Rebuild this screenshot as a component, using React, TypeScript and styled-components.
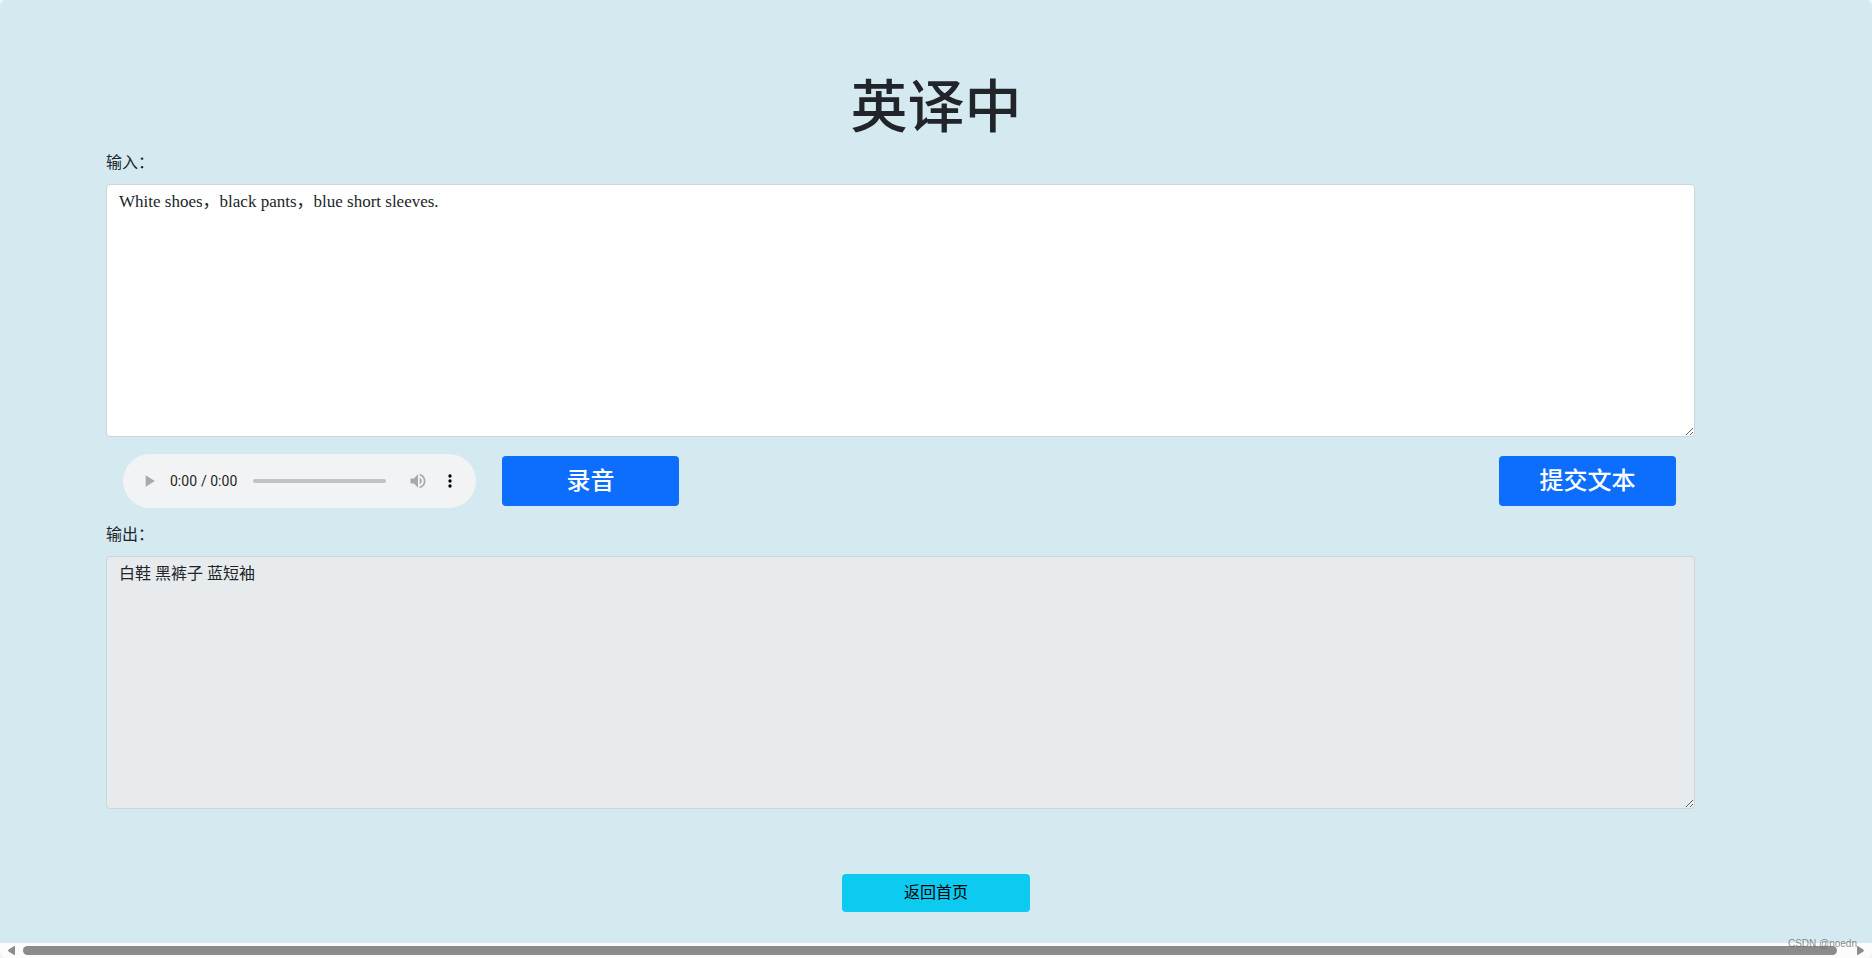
import React, { useState } from "react";
import styled, { createGlobalStyle } from "styled-components";

const GlobalStyle = createGlobalStyle`
  *, *::before, *::after { box-sizing: border-box; }
  html { background: #f4f4f4; }
  body {
    margin: 0;
    color: #212529;
    font-family: "Liberation Serif", "Noto Sans CJK SC", serif;
    font-size: 16px;
    line-height: 24px;
  }
`;

const Page = styled.div`
  position: relative;
  display: flex;
  flex-direction: column;
  min-height: 100vh;
  overflow: hidden;
  background: #d4eaf0;
  border-radius: 6px;
`;

const Main = styled.main`
  display: flex;
  flex: 1;
  flex-direction: column;
  padding-top: 73px;
`;

const Title = styled.h1`
  margin: 0 0 8px;
  font-size: 57px;
  font-weight: 500;
  line-height: 70px;
  text-align: center;
`;

const Form = styled.form`
  display: flex;
  flex-direction: column;
  margin: 0 177px 0 106px;
`;

const Label = styled.label`
  margin-bottom: 9px;
`;

const TextArea = styled.textarea`
  display: block;
  width: 100%;
  height: 253px;
  padding: 5px 12px;
  border: 1px solid #ced4da;
  border-radius: 4px;
  background: ${(p) => (p.readOnly ? "#e7ebee" : "#fff")};
  color: inherit;
  font: inherit;
  font-size: ${(p) => (p.readOnly ? 16 : 17)}px;
  resize: vertical;
`;

const Toolbar = styled.div`
  display: flex;
  align-items: center;
  gap: 26px;
  padding: 17px 19px 15px 17px;
`;

const Player = styled.audio`
  width: 353px;
  height: 54px;
`;

const Button = styled.button<{ $variant: "primary" | "info" }>`
  width: ${(p) => (p.$variant === "primary" ? 177 : 188)}px;
  padding: 6px 12px;
  border: 1px solid transparent;
  border-radius: 4px;
  background: ${(p) => (p.$variant === "primary" ? "#0d6efd" : "#0dcaf0")};
  color: ${(p) => (p.$variant === "primary" ? "#fff" : "#000")};
  font: inherit;
  font-size: ${(p) => (p.$variant === "primary" ? 24 : 16)}px;
  font-weight: ${(p) => (p.$variant === "primary" ? 500 : 400)};
  line-height: ${(p) => (p.$variant === "primary" ? 36 : 24)}px;
  cursor: pointer;
`;

const SubmitSlot = styled.div`
  display: flex;
  margin-left: auto;
`;

const Footer = styled.footer`
  display: flex;
  justify-content: center;
  padding: 65px 0 30px;
`;

const ScrollBar = styled.div`
  display: flex;
  align-items: center;
  gap: 8px;
  height: 15px;
  padding: 0 8px;
  background: #fcfcfc;
`;

const ScrollArrow = styled.button`
  display: flex;
  width: 7px;
  padding: 0;
  border: 0;
  background: none;
`;

const Thumb = styled.div`
  flex: 1;
  height: 9px;
  margin-right: 12px;
  border-radius: 5px;
  background: #8b8b8b;
`;

const Watermark = styled.span`
  position: absolute;
  right: 15px;
  bottom: 6px;
  color: rgba(100, 100, 100, 0.75);
  font-family: "Liberation Sans", sans-serif;
  font-size: 10px;
  line-height: 16px;
`;

export default function App() {
  const [text, setText] = useState("White shoes\uFF0Cblack pants\uFF0Cblue short sleeves.");

  return (
    <Page lang="zh-CN">
      <GlobalStyle />
      <Main>
        <Title>英译中</Title>
        <Form onSubmit={(e) => e.preventDefault()}>
          <Label htmlFor="source">{"输入\uFF1A"}</Label>
          <TextArea
            id="source"
            rows={10}
            spellCheck={false}
            value={text}
            onChange={(e) => setText(e.target.value)}
          />
          <Toolbar>
            <Player controls />
            <Button type="button" $variant="primary">录音</Button>
            <SubmitSlot>
              <Button type="submit" $variant="primary">提交文本</Button>
            </SubmitSlot>
          </Toolbar>
          <Label htmlFor="result">{"输出\uFF1A"}</Label>
          <TextArea id="result" rows={10} readOnly value="白鞋 黑裤子 蓝短袖" />
        </Form>
        <Footer>
          <Button type="button" $variant="info">返回首页</Button>
        </Footer>
      </Main>
      <ScrollBar>
        <ScrollArrow type="button" aria-label="Scroll left">
          <svg width="7" height="9" viewBox="0 0 7 9">
            <path d="M7 0v9Q6 9 5 8.300L1 5.800Q-.8 4.500 1 3.200L5 .7Q6 0 7 0Z" fill="#8b8b8b" />
          </svg>
        </ScrollArrow>
        <Thumb />
        <ScrollArrow type="button" aria-label="Scroll right">
          <svg width="7" height="9" viewBox="0 0 7 9">
            <path d="M0 0v9Q1 9 2 8.300L6 5.800Q7.800 4.500 6 3.200L2 .7Q1 0 0 0Z" fill="#8b8b8b" />
          </svg>
        </ScrollArrow>
      </ScrollBar>
      <Watermark>CSDN @noedn</Watermark>
    </Page>
  );
}
